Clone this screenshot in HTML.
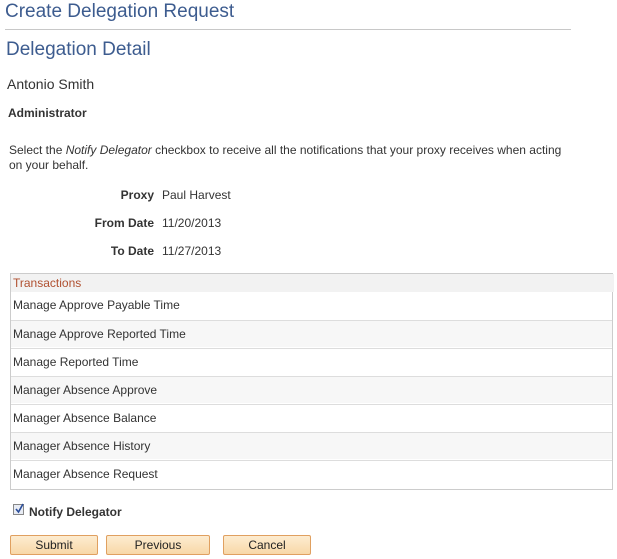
<!DOCTYPE html>
<html><head><style>
body{margin:0;width:617px;height:559px;background:#fff;font-family:"Liberation Sans",Arial,sans-serif;position:relative;overflow:hidden;color:#333}
.a{position:absolute;white-space:nowrap}
.lbl{font-size:12px;font-weight:bold;color:#333;text-align:right;width:150px;left:4px}
.val{font-size:12px;color:#333;left:162px}
.row{position:absolute;left:11px;width:601px;height:27px;border-top:1px solid #ddd;font-size:12px;line-height:27px;padding-left:2px;box-sizing:border-box;color:#333}
.btn{position:absolute;top:535px;height:20px;box-sizing:border-box;border:1px solid #e0a060;background:linear-gradient(#fdecd0,#f8d8a8);font-size:12px;text-align:center;line-height:18px;color:#222;border-radius:2px}
</style></head><body>
<div class="a" style="left:5px;top:1px;font-size:19px;color:#3d5c8f">Create Delegation Request</div>
<div class="a" style="left:5px;top:29px;width:566px;height:1px;background:#c8c8c8"></div>
<div class="a" style="left:6px;top:39px;font-size:19px;color:#3d5c8f">Delegation Detail</div>
<div class="a" style="left:7px;top:76px;font-size:14px;color:#333">Antonio Smith</div>
<div class="a" style="left:8px;top:106px;font-size:12px;font-weight:bold;color:#333">Administrator</div>
<div class="a" style="left:9px;top:143px;font-size:12px;line-height:15px;white-space:normal;width:556px">Select the <i>Notify Delegator</i> checkbox to receive all the notifications that your proxy receives when acting on your behalf.</div>
<div class="a lbl" style="top:188px">Proxy</div><div class="a val" style="top:188px">Paul Harvest</div>
<div class="a lbl" style="top:216px">From Date</div><div class="a val" style="top:216px">11/20/2013</div>
<div class="a lbl" style="top:244px">To Date</div><div class="a val" style="top:244px">11/27/2013</div>
<div class="a" style="left:10px;top:273px;width:603px;height:217px;border:1px solid #ccc;box-sizing:border-box;background:#fff"></div>
<div class="a" style="left:11px;top:274px;width:601px;height:18px;background:#f2f2f2;font-size:12px;line-height:18px;color:#b05030;padding-left:2px">Transactions</div>
<div class="row" style="top:292px;background:#fff;border-top:none">Manage Approve Payable Time</div>
<div class="row" style="top:320px;background:#f7f7f7">Manage Approve Reported Time</div>
<div class="row" style="top:348px;background:#fff">Manage Reported Time</div>
<div class="row" style="top:376px;background:#f7f7f7">Manager Absence Approve</div>
<div class="row" style="top:404px;background:#fff">Manager Absence Balance</div>
<div class="row" style="top:432px;background:#f7f7f7">Manager Absence History</div>
<div class="row" style="top:460px;background:#fff">Manager Absence Request</div>
<div class="a" style="left:13px;top:504px;width:11px;height:11px;border:1px solid #888;background:#e8ecf4;box-sizing:border-box"></div>
<svg class="a" style="left:14px;top:503px" width="11" height="11"><path d="M2 6 L4.5 9 L9 1" stroke="#2a4d9a" stroke-width="1.6" fill="none"/></svg>
<div class="a" style="left:29px;top:505px;font-size:12px;font-weight:bold;color:#333">Notify Delegator</div>
<div class="btn" style="left:10px;width:88px">Submit</div>
<div class="btn" style="left:106px;width:104px">Previous</div>
<div class="btn" style="left:223px;width:88px">Cancel</div>
</body></html>
